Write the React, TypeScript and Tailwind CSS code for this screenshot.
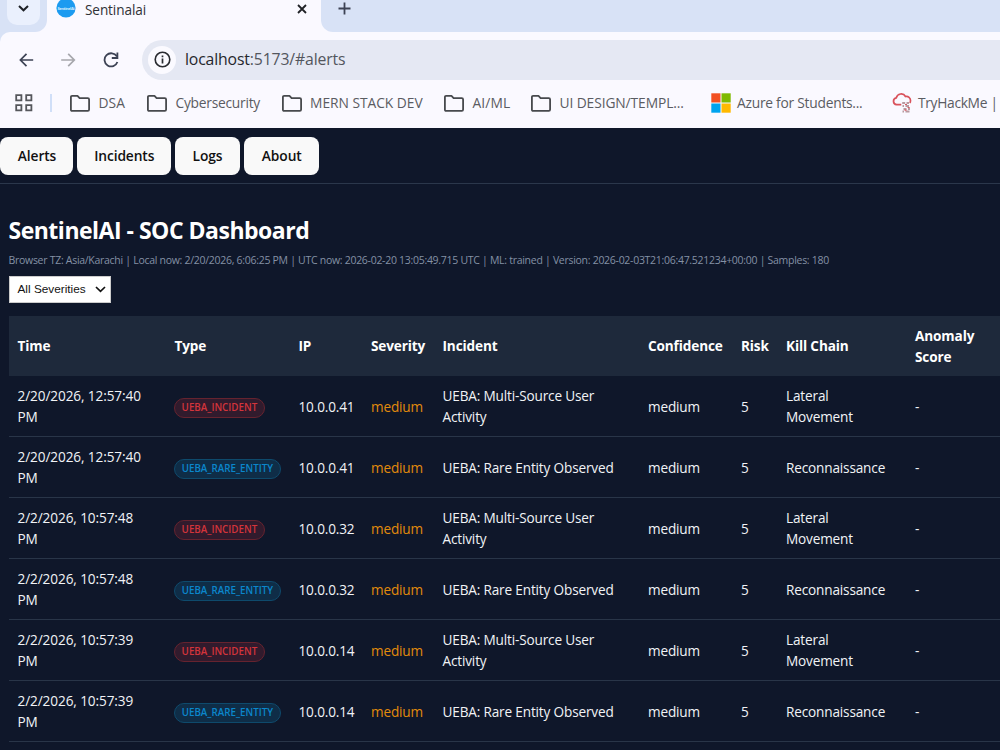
import React from 'react';

type Alert = {
  time: string;
  type: 'UEBA_INCIDENT' | 'UEBA_RARE_ENTITY';
  ip: string;
  incident: string[];
  chain: string[];
};

const pairs: [string, string][] = [
  ['2/20/2026, 12:57:40', '10.0.0.41'],
  ['2/2/2026, 10:57:48', '10.0.0.32'],
  ['2/2/2026, 10:57:39', '10.0.0.14'],
];

const alerts: Alert[] = pairs.flatMap(([time, ip]): Alert[] => [
  { time, ip, type: 'UEBA_INCIDENT', incident: ['UEBA: Multi-Source User', 'Activity'], chain: ['Lateral', 'Movement'] },
  { time, ip, type: 'UEBA_RARE_ENTITY', incident: ['UEBA: Rare Entity Observed'], chain: ['Reconnaissance'] },
]);

const badgeStyles = {
  UEBA_INCIDENT: 'w-[91px] border-[#66232f] bg-[#311b2d] text-[#d3343b]',
  UEBA_RARE_ENTITY: 'w-[107px] border-[#0e4a6c] bg-[#0f2d47] text-[#0b87cc]',
};

const columns = 'grid grid-cols-[157px_124px_72.5px_71.5px_205.5px_93px_45px_129px_120px] w-[1018px] items-center';

function Lines({ items }: { items: string[] }) {
  return (
    <div>
      {items.map((t) => (
        <div key={t} className="w-max whitespace-nowrap">{t}</div>
      ))}
    </div>
  );
}

function Folder({ label, width, tracking }: { label: string; width: string; tracking: string }) {
  return (
    <div className={`flex shrink-0 items-center gap-[8.5px] ${width}`}>
      <svg width="20" height="17" viewBox="0 0 20 17" fill="none" stroke="#47494d" strokeWidth="1.8" strokeLinejoin="round" className="shrink-0">
        <path d="M.9 2.1Q.9.9 2.1.9H7.5L9.6 3.1H17.8Q19.1 3.1 19.1 4.4V14.6Q19.1 15.9 17.8 15.9H2.1Q.9 15.9.9 14.7Z" />
      </svg>
      <span className={`whitespace-nowrap ${tracking}`}>{label}</span>
    </div>
  );
}

function BrowserChrome() {
  return (
    <header className="h-32 bg-[#faf9ff] text-[#303236]">
      <div className="flex h-8 bg-[#d8e2f6]">
        <div className="h-8 w-[47px] shrink-0 bg-[#faf9ff]">
          <div className="h-8 rounded-br-[12px] bg-[#d8e2f6] pl-[7px]">
            <div className="flex h-[25px] w-[33px] items-center justify-center rounded-b-[10px] bg-[#eaf0fd] pb-[8px]">
              <svg width="11" height="7" viewBox="0 0 11 7" fill="none" stroke="#1e2126" strokeWidth="2"><path d="M1 1l4.5 4.3L10 1" /></svg>
            </div>
          </div>
        </div>
        <div className="flex h-8 w-[274px] shrink-0 bg-[#faf9ff] pl-[9px]">
          <svg width="20" height="20" viewBox="0 0 20 20" className="-mt-[2px] shrink-0">
            <circle cx="10" cy="10" r="9.6" fill="#1c9bf0" />
            <text x="10" y="12.2" textAnchor="middle" fill="#d2ecfd" fontFamily="Open Sans" fontWeight="700" fontSize="4" textLength="17">SentinelAi</text>
          </svg>
          <span className="ml-[9px] w-[212px] text-[13.6px] leading-5 tracking-[-0.1px]">Sentinalai</span>
          <svg width="10" height="10" viewBox="0 0 10 10" stroke="#202226" strokeWidth="1.8" className="mt-[4px]"><path d="M1 1l8 8M9 1L1 9" /></svg>
        </div>
        <div className="h-8 flex-1 bg-[#faf9ff]">
          <div className="h-8 rounded-bl-[12px] bg-[#d8e2f6] pl-[17px] pt-[2px]">
            <svg width="13" height="13" viewBox="0 0 13 13" stroke="#3c4254" strokeWidth="1.8"><path d="M6.5.5v12M.5 6.5h12" /></svg>
          </div>
        </div>
      </div>
      <div className="bg-[#d8e2f6]">
        <div className="flex h-12 items-center rounded-tl-[10px] bg-[#faf9ff] pt-[7px]">
          <svg width="15" height="14" viewBox="0 0 15 14" fill="none" stroke="#3c4254" strokeWidth="1.7" className="ml-[19px]"><path d="M14.2 7H1.5M7.5.8L1.4 7l6.1 6.2" /></svg>
          <svg width="15" height="14" viewBox="0 0 15 14" fill="none" stroke="#a6a7ac" strokeWidth="1.7" className="ml-[27px]"><path d="M.2 7h13M7.2.8L13.3 7l-6.1 6.2" /></svg>
          <svg width="16" height="16" viewBox="0 0 16 16" fill="none" stroke="#3c4254" strokeWidth="1.8" className="ml-[27px]"><path d="M13.8 4.4A6.6 6.6 0 1 0 14.4 10M14.4.5V6H8.8" /></svg>
          <div className="ml-[23px] flex h-10 flex-1 items-center rounded-l-full bg-[#e5e8f3] pl-[6px]">
            <div className="flex size-7 items-center justify-center rounded-full bg-[#fbfaff]">
              <svg width="17" height="17" viewBox="0 0 17 17" fill="none" stroke="#292b30" strokeWidth="1.6"><circle cx="8.5" cy="8.5" r="7.3" /><path d="M8.5 7.6v4.8M8.5 4.5v1.8" strokeWidth="1.7" /></svg>
            </div>
            <div className="ml-[9px] whitespace-nowrap text-[15.8px] tracking-[-0.15px] text-[#53565d]"><span className="text-[#25272c]">localhost</span>:5173/#alerts</div>
          </div>
        </div>
      </div>
      <div className="flex h-[46px] items-center overflow-hidden pl-[15px] text-[13.8px] text-[#5a5c62]">
        <svg width="18" height="18" viewBox="0 0 18 18" fill="none" stroke="#55575c" strokeWidth="1.8" className="shrink-0"><path d="M1.2 1.2h5.2v5.2H1.2zM11.2 1.2h5.2v5.2h-5.2zM1.2 11.2h5.2v5.2H1.2zM11.2 11.2h5.2v5.2h-5.2z" /></svg>
        <div className="ml-[17px] mr-[18px] h-[18px] w-[2px] shrink-0 bg-[#d0dff8]" />
        <Folder label="DSA" width="w-[77px]" tracking="tracking-[0.1px]" />
        <Folder label="Cybersecurity" width="w-[134.5px]" tracking="tracking-[-0.25px]" />
        <Folder label="MERN STACK DEV" width="w-[162.5px]" tracking="tracking-[-0.03px]" />
        <Folder label="AI/ML" width="w-[87px]" tracking="tracking-[0.1px]" />
        <Folder label="UI DESIGN/TEMPL..." width="w-[180px]" tracking="tracking-[-0.1px]" />
        <div className="flex w-[181px] shrink-0 items-center gap-[6px]">
          <svg width="20" height="20" viewBox="0 0 20 20" className="shrink-0"><path fill="#f25022" d="M.3.3h9.2v9.2H.3z" /><path fill="#7fba00" d="M10.5.3h9.2v9.2h-9.2z" /><path fill="#00a4ef" d="M.3 10.5h9.2v9.2H.3z" /><path fill="#ffb900" d="M10.5 10.5h9.2v9.2h-9.2z" /></svg>
          <span className="whitespace-nowrap tracking-[-0.25px]">Azure for Students...</span>
        </div>
        <svg width="20" height="20" viewBox="0 0 20 20" fill="none" className="shrink-0">
          <path d="M9.3 11.7H4.6A3.5 3.5 0 0 1 4.3 4.8 5 5 0 0 1 13.5 3.5a4.1 4.1 0 0 1 5 4.2q0 1.5-.8 2.2" stroke="#d9525b" strokeWidth="1.7" />
          <path d="M10.2 10h3M14.5 10h2.5M10.5 13h1.5M13.5 13h3.5M11.5 16h3M16 16h2M10.5 18.5h1.5M13.5 18.5h4" stroke="#b79aa0" strokeWidth="1.8" />
          <path d="M13 11.5h2M15.5 14.5h2.2M12.5 17.2h2" stroke="#d95a63" strokeWidth="1.2" />
        </svg>
        <span className="ml-[6px] whitespace-nowrap tracking-[-0.32px]">TryHackMe |</span>
      </div>
    </header>
  );
}

const nav = [
  { label: 'Alerts', width: 'w-[73px]' },
  { label: 'Incidents', width: 'w-[93.5px]' },
  { label: 'Logs', width: 'w-[65px]' },
  { label: 'About', width: 'w-[75.5px]' },
];

const headings = [['Time'], ['Type'], ['IP'], ['Severity'], ['Incident'], ['Confidence'], ['Risk'], ['Kill Chain'], ['Anomaly', 'Score']];

export default function App() {
  return (
    <div className="h-[750px] w-[1000px] overflow-hidden bg-[#0f172a] font-['Open_Sans','Noto_Sans',sans-serif]">
      <BrowserChrome />
      <nav className="flex h-14 gap-[4px] border-b border-[#2b374b] pt-[9px]">
        {nav.map((n) => (
          <button key={n.label} className={`h-[37.5px] shrink-0 rounded-[8px] bg-[#f9f9f9] pl-px pt-px text-[13.8px] font-semibold text-[#111] tracking-[-0.12px] ${n.width}`}>{n.label}</button>
        ))}
      </nav>
      <main className="pl-[8.5px]">
        <h1 className="mt-[29px] h-[35px] w-max whitespace-nowrap text-[23px] font-bold leading-[34px] tracking-[-0.5px] text-white">SentinelAI - SOC Dashboard</h1>
        <p className="mt-[3px] h-[18px] w-max whitespace-nowrap text-[10.5px] leading-[18px] tracking-[-0.285px] text-[#8491a5]">
          Browser TZ: Asia/Karachi | Local now: 2/20/2026, 6:06:25 PM | UTC now: 2026-02-20 13:05:49.715 UTC | ML: trained | Version: 2026-02-03T21:06:47.521234+00:00 | Samples: 180
        </p>
        <button className="mt-[7px] flex h-[27px] w-[102px] items-center justify-between border border-[#ccc] bg-white pl-[8px] pr-[4px] font-['Liberation_Sans',sans-serif] text-[11.8px] text-[#111]">
          All Severities
          <svg width="11" height="7" viewBox="0 0 11 7" fill="none" stroke="#111" strokeWidth="1.7"><path d="M1 1l4.5 4.3L10 1" /></svg>
        </button>
        <section className="mt-[13px] text-[13.6px] leading-[21px] tracking-[-0.16px] text-[#f1f3f6]">
          <div className={`${columns} h-[60px] bg-[#1e293b] font-bold text-white`}>
            {headings.map((h) => (
              <div key={h[0]} className={h.length === 1 ? 'pb-px pl-[9px] tracking-[-0.13px]' : 'pl-[9px] tracking-[-0.13px]'}><Lines items={h} /></div>
            ))}
          </div>
          {alerts.map((a, i) => (
            <div key={i} className={`${columns} h-[61px] border-b border-[#293548]`}>
              <div className="pl-[9px] tracking-[-0.1px]"><Lines items={[a.time, 'PM']} /></div>
              <div className="pl-[8.4px] pt-[3px]">
                <div className={`flex h-5 items-center justify-center whitespace-nowrap rounded-full border text-[9.8px] font-semibold tracking-[0px] ${badgeStyles[a.type]}`}><span>{a.type}</span></div>
              </div>
              <div className="pl-[9px]"><Lines items={[a.ip]} /></div>
              <div className="pl-[9px] text-[#e28b0c]"><Lines items={['medium']} /></div>
              <div className="pl-[9px]"><Lines items={a.incident} /></div>
              <div className="pl-[9px]"><Lines items={['medium']} /></div>
              <div className="pl-[9px]">5</div>
              <div className="pl-[9px]"><Lines items={a.chain} /></div>
              <div className="pl-[9px]">-</div>
            </div>
          ))}
        </section>
      </main>
    </div>
  );
}
